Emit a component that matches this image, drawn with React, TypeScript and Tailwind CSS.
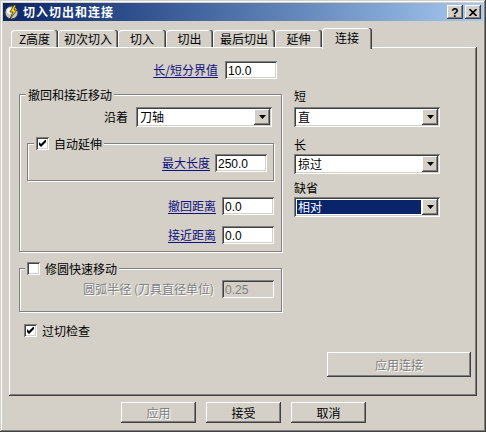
import React from "react";

const RAISED =
  "shadow-[inset_-1px_-1px_#404040,inset_1px_1px_#ffffff,inset_-2px_-2px_#808080,inset_2px_2px_#d4d0c8]";
const SUNKEN =
  "shadow-[inset_1px_1px_#808080,inset_-1px_-1px_#ffffff,inset_2px_2px_#404040,inset_-2px_-2px_#d4d0c8]";
const ETCHED = "border border-[#808080] shadow-[inset_1px_1px_#ffffff,1px_1px_#ffffff]";
const TAB =
  "shadow-[inset_-1px_0_#404040,inset_-2px_0_#808080,inset_1px_1px_#ffffff] rounded-t-[3px] bg-[#d4d0c8] flex items-center justify-center";

function Arrow() {
  return (
    <svg width="7" height="4" viewBox="0 0 7 4">
      <polygon points="0,0 7,0 3.5,4" fill="#000" />
    </svg>
  );
}

function Field({ value, disabled }: { value: string; disabled?: boolean }) {
  return (
    <div
      className={`w-[52px] h-[18px] ${SUNKEN} ${
        disabled ? "bg-[#d4d0c8] text-[#808080]" : "bg-white text-black"
      } flex items-center pl-[3px] pt-[1px] text-[12px] leading-[12px] font-['Liberation_Sans',sans-serif]`}
    >
      {value}
    </div>
  );
}

function Combo({ value, w, selected }: { value: string; w: string; selected?: boolean }) {
  return (
    <div className={`${w} h-[20px] ${SUNKEN} bg-white flex p-[2px]`}>
      {selected ? (
        <div className="flex-1 m-[1px] bg-[#0a246a] text-white flex items-center pl-[1px]">{value}</div>
      ) : (
        <div className="flex-1 flex items-center pl-[2px]">{value}</div>
      )}
      <div className={`w-[16px] h-full bg-[#d4d0c8] ${RAISED} flex items-center justify-center`}>
        <Arrow />
      </div>
    </div>
  );
}

function Check({ checked }: { checked?: boolean }) {
  return (
    <div className={`w-[13px] h-[13px] shrink-0 bg-white ${SUNKEN} flex items-center justify-center`}>
      {checked && (
        <svg width="7" height="7" viewBox="0 0 7 7">
          <path d="M0 2 L2 4 L7 -1 L7 2 L2 7 L0 5 Z" fill="#000" />
        </svg>
      )}
    </div>
  );
}

function Link({ children, cls }: { children: React.ReactNode; cls: string }) {
  return (
    <span className={`${cls} text-[#10107c] underline underline-offset-[2px] decoration-[1px]`}>{children}</span>
  );
}

function Button({ label, w, h, disabled }: { label: string; w: string; h: string; disabled?: boolean }) {
  return (
    <div
      className={`${w} ${h} bg-[#d4d0c8] ${RAISED} flex items-center justify-center ${
        disabled ? "text-[#808080] [text-shadow:1px_1px_0_#ffffff]" : "text-black"
      }`}
    >
      {label}
    </div>
  );
}

function AppIcon() {
  return (
    <svg width="16" height="16" viewBox="0 0 16 16">
      <circle cx="7.5" cy="8.5" r="6.5" fill="#c8c8c8" stroke="#404040" strokeWidth="1" />
      <circle cx="6" cy="7" r="3" fill="#f4f4f4" />
      <path d="M10 1 L6 8 L9 8 L6 15 L13 6 L10 6 L12 1 Z" fill="#f0e020" stroke="#403000" strokeWidth="0.8" />
    </svg>
  );
}

export default function App() {
  return (
    <div className="w-[486px] h-[432px] bg-[#d4d0c8] p-[3px] shadow-[inset_-1px_-1px_#404040,inset_1px_1px_#d4d0c8,inset_-2px_-2px_#808080,inset_2px_2px_#ffffff] font-['Noto_Sans_CJK_SC',sans-serif] text-[12px] leading-[12px] text-black flex flex-col overflow-hidden select-none">
      {/* title bar */}
      <div className="h-[18px] shrink-0 bg-linear-to-r from-[#0a246a] to-[#a6caf0] flex items-center pl-[1px] pr-[2px]">
        <AppIcon />
        <span className="ml-[3px] text-white font-bold text-[12px] tracking-[1px]">切入切出和连接</span>
        <div className="ml-auto flex gap-[2px]">
          <div className={`w-[16px] h-[14px] bg-[#d4d0c8] ${RAISED} flex items-center justify-center`}>
            <span className="font-['Liberation_Sans',sans-serif] font-bold text-[12px] leading-[12px] pt-[1px]">?</span>
          </div>
          <div className={`w-[16px] h-[14px] bg-[#d4d0c8] ${RAISED} flex items-center justify-center`}>
            <svg width="8" height="7" viewBox="0 0 8 7">
              <path d="M0.5 0 L7.5 7 M7.5 0 L0.5 7" stroke="#000" strokeWidth="1.6" />
            </svg>
          </div>
        </div>
      </div>

      {/* tabs */}
      <div className="mt-[7px] ml-[8px] h-[19px] shrink-0 flex items-end">
        <div className={`${TAB} w-[47px] h-[17px]`}>Z高度</div>
        <div className={`${TAB} w-[60px] h-[17px]`}>初次切入</div>
        <div className={`${TAB} w-[48px] h-[17px]`}>切入</div>
        <div className={`${TAB} w-[47px] h-[17px]`}>切出</div>
        <div className={`${TAB} w-[62px] h-[17px]`}>最后切出</div>
        <div className={`${TAB} w-[47px] h-[17px]`}>延伸</div>
        <div className={`${TAB} w-[50px] h-[21px] -mb-[2px] pb-[2px] relative z-10`}>连接</div>
      </div>

      {/* tab page */}
      <div className="ml-[6px] w-[468px] h-[349px] shrink-0 shadow-[inset_-1px_-1px_#404040,inset_1px_1px_#ffffff,inset_-2px_-2px_#808080] pt-[14px] pl-[10px] pr-[6px] flex flex-col">
        <div className="flex">
          {/* left column */}
          <div className="w-[264px] flex flex-col">
            <div className="h-[18px] flex items-center justify-end pr-[6px]">
              <Link cls="mr-[7px]">长/短分界值</Link>
              <Field value="10.0" />
            </div>

            <div className={`relative mt-[15px] w-[263px] h-[158px] ${ETCHED} flex flex-col`}>
              <div className="absolute -top-[7px] left-[6px] px-[2px] h-[13px] bg-[#d4d0c8] flex items-center">
                撤回和接近移动
              </div>
              <div className="mt-[12px] h-[20px] flex items-center justify-end pr-[9px]">
                <span className="mr-[8px]">沿着</span>
                <Combo value="刀轴" w="w-[136px]" />
              </div>

              <div className={`relative mt-[16px] ml-[7px] w-[247px] h-[38px] ${ETCHED} flex flex-col`}>
                <div className="absolute -top-[7px] left-[6px] px-[2px] h-[13px] bg-[#d4d0c8] flex items-center">
                  <Check checked />
                  <span className="ml-[5px]">自动延伸</span>
                </div>
                <div className="mt-[10px] h-[18px] flex items-center justify-end pr-[6px]">
                  <Link cls="mr-[5px]">最大长度</Link>
                  <Field value="250.0" />
                </div>
              </div>

              <div className="mt-[16px] h-[18px] flex items-center justify-end pr-[7px]">
                <Link cls="mr-[6px]">撤回距离</Link>
                <Field value="0.0" />
              </div>
              <div className="mt-[11px] h-[18px] flex items-center justify-end pr-[7px]">
                <Link cls="mr-[6px]">接近距离</Link>
                <Field value="0.0" />
              </div>
            </div>

            <div className={`relative mt-[16px] w-[263px] h-[44px] ${ETCHED} flex flex-col`}>
              <div className="absolute -top-[7px] left-[5px] px-[2px] h-[13px] bg-[#d4d0c8] flex items-center">
                <Check />
                <span className="ml-[5px]">修圆快速移动</span>
              </div>
              <div className="mt-[11px] h-[18px] flex items-center justify-end pr-[7px]">
                <span className="mr-[8px] text-[#808080] [text-shadow:1px_1px_0_#ffffff]">圆弧半径 (刀具直径单位)</span>
                <Field value="0.25" disabled />
              </div>
            </div>

            <div className="mt-[12px] ml-[5px] h-[13px] flex items-center">
              <Check checked />
              <span className="ml-[5px]">过切检查</span>
            </div>
          </div>

          {/* right column */}
          <div className="ml-[11px] w-[146px] flex flex-col pt-[29px]">
            <div className="h-[12px]">短</div>
            <div className="mt-[5px]">
              <Combo value="直" w="w-[146px]" />
            </div>
            <div className="mt-[12px] h-[12px]">长</div>
            <div className="mt-[3px]">
              <Combo value="掠过" w="w-[146px]" />
            </div>
            <div className="mt-[8px] h-[12px]">缺省</div>
            <div className="mt-[3px]">
              <Combo value="相对" w="w-[146px]" selected />
            </div>
          </div>
        </div>

        <div className="mt-[15px] flex justify-end">
          <Button label="应用连接" w="w-[144px]" h="h-[25px]" disabled />
        </div>
      </div>

      {/* bottom buttons */}
      <div className="mt-[6px] ml-[118px] flex gap-[10px]">
        <Button label="应用" w="w-[75px]" h="h-[21px]" disabled />
        <Button label="接受" w="w-[75px]" h="h-[21px]" />
        <Button label="取消" w="w-[75px]" h="h-[21px]" />
      </div>
    </div>
  );
}
